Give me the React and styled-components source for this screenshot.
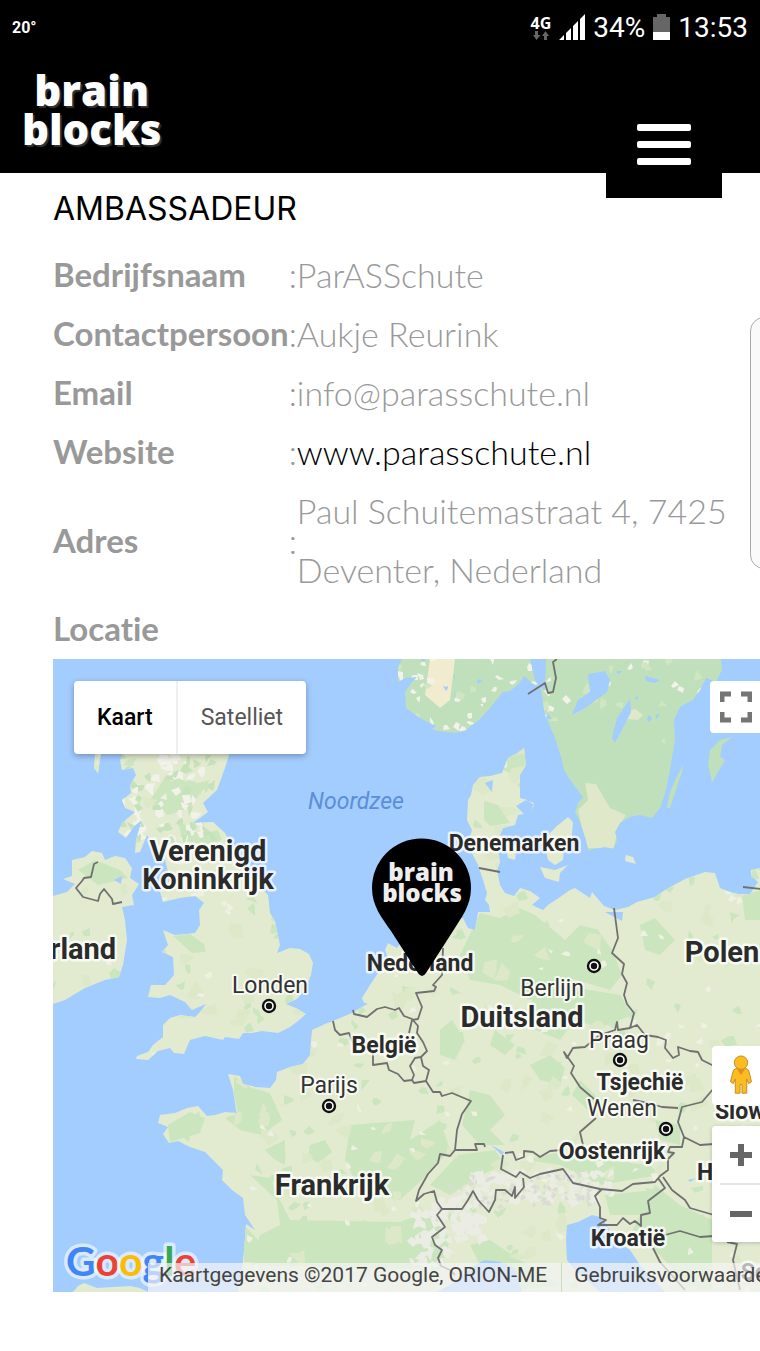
import React from "react";
import styled, { createGlobalStyle } from "styled-components";

const GlobalStyle = createGlobalStyle`
  * {
    box-sizing: border-box;
  }

  body {
    margin: 0;
    background: #fff;
    overflow-x: hidden;
    font-family: Lato, "Open Sans", sans-serif;
  }
`;

const Page = styled.div`
  position: relative;
  overflow-x: hidden;
  padding-bottom: 59px;
`;

const StatusBar = styled.div`
  display: flex;
  align-items: center;
  justify-content: space-between;
  height: 54px;
  padding: 0 12px;
  background: #000;
  color: #fff;
  font-family: Roboto, sans-serif;
`;

const Temperature = styled.span`
  font-size: 16px;
  font-weight: 700;
`;

const StatusItems = styled.div`
  display: flex;
  align-items: center;
  gap: 8px;
  font-size: 28px;
`;

const Network = styled.div`
  display: flex;
  flex-direction: column;
  align-items: center;
  font-family: "Open Sans", sans-serif;
  font-size: 16px;
  font-weight: 700;
  line-height: 16px;
`;

const Header = styled.header`
  display: flex;
  justify-content: space-between;
  height: 119px;
  padding: 0 38px 0 22px;
  background: #000;
`;

const Logo = styled.a`
  display: flex;
  flex-direction: column;
  align-items: center;
  padding-top: 16px;
  color: #fff;
  font-family: "Open Sans", sans-serif;
  font-size: 42px;
  font-weight: 800;
  line-height: 39px;
  text-decoration: none;
  text-shadow: 2px 2px 1px #333;
`;

const MenuButton = styled.button`
  position: relative;
  z-index: 1;
  display: flex;
  flex-direction: column;
  align-items: center;
  justify-content: flex-end;
  gap: 10px;
  width: 116px;
  height: 144px;
  padding: 0 0 33px;
  border: 0;
  background: #000;
`;

const MenuLine = styled.span`
  width: 54px;
  height: 7px;
  border-radius: 2px;
  background: #fff;
`;

const Content = styled.main`
  padding-left: 53px;
`;

const Title = styled.h1`
  margin: 0;
  padding: 16px 0 17px;
  color: #000;
  font-family: Inter, sans-serif;
  font-size: 32px;
  font-weight: 400;
  line-height: 39px;
`;

const Details = styled.table`
  border-collapse: collapse;
  color: #999;
  font-size: 34px;
  font-variant-ligatures: none;
  line-height: 59px;
`;

const Label = styled.th`
  padding: 0;
  font-size: 33px;
  font-weight: 700;
  text-align: left;
  white-space: nowrap;
`;

const Colon = styled.td`
  padding: 0;
  font-weight: 300;
`;

const Value = styled.td`
  padding: 0 24px 0 0;
  font-weight: 300;
`;

const SiteLink = styled.a`
  color: #000;
  text-decoration: none;
`;

const SidePanel = styled.aside`
  position: fixed;
  top: 317px;
  right: -50px;
  width: 60px;
  height: 252px;
  border: 1px solid #aaa;
  border-radius: 14px;
  background: #fafafa;
`;

const Map = styled.section`
  position: relative;
  height: 633px;
  margin-top: 1px;
  overflow: hidden;
  background: #a3ccff;
  font-family: Roboto, sans-serif;
`;

const MapCanvas = styled.svg`
  display: block;
  width: 100%;
  height: 100%;
`;

const MapTypes = styled.div`
  position: absolute;
  top: 22px;
  left: 21px;
  display: flex;
  border-radius: 4px;
  background: #fff;
  box-shadow: 0 2px 6px rgba(0, 0, 0, 0.3);
`;

const MapType = styled.button`
  height: 73px;
  padding: 0 23px;
  border: 0;
  border-left: ${({ $active }) => ($active ? "0" : "2px solid #f0f0f0")};
  background: none;
  color: ${({ $active }) => ($active ? "#000" : "#565656")};
  font-family: Roboto, sans-serif;
  font-size: 23px;
  font-weight: ${({ $active }) => ($active ? 500 : 400)};
`;

const ControlButton = styled.button`
  display: flex;
  align-items: center;
  justify-content: center;
  width: ${({ $width = 58 }) => $width}px;
  height: ${({ $height }) => $height}px;
  padding: 0;
  border: 0;
  border-radius: 4px;
  background: #fff;
`;

const Fullscreen = styled.div`
  position: absolute;
  top: 22px;
  right: -2px;
`;

const MapControls = styled.div`
  position: absolute;
  top: 387px;
  right: -10px;
  display: flex;
  flex-direction: column;
  gap: 21px;
`;

const ZoomControls = styled.div`
  border-radius: 4px;
  background: #fff;
  box-shadow: 0 1px 4px rgba(0, 0, 0, 0.2);
`;

const Divider = styled.div`
  height: 2px;
  margin: 0 8px;
  background: #e6e6e6;
`;

const Attribution = styled.div`
  position: absolute;
  right: 0;
  bottom: 0;
  left: 95px;
  display: flex;
  height: 29px;
  padding-left: 11px;
  overflow: hidden;
  background: rgba(245, 245, 245, 0.7);
  color: #444;
  font-size: 21px;
  line-height: 24px;
  white-space: nowrap;
`;

const Terms = styled.a`
  margin-left: 14px;
  padding-left: 12px;
  border-left: 1px solid #cbdcc3;
  color: #444;
  text-decoration: none;
`;

const details = [
  { label: "Bedrijfsnaam", value: "ParASSchute" },
  { label: "Contactpersoon", value: "Aukje Reurink" },
  { label: "Email", value: "info@parasschute.nl" },
  { label: "Website", value: "www.parasschute.nl", link: true },
  { label: "Adres", value: "Paul Schuitemastraat 4, 7425 Deventer, Nederland" },
];

const land = [
  // great britain
  "M130 740L232 740 229 755 225 768 217 790 203 803 208 812 193 823 213 822 225 833 232 845 240 865 268 895 270 913 275 921 280 945 277 953 290 948 300 949 309 954 313 963 311 975 305 990 297 999 286 1004 296 1008 306 1014 298 1021 290 1027 278 1033 262 1031 252 1033 243 1033 239 1039 225 1037 223 1040 205 1036 190 1040 187 1047 184 1054 174 1053 170 1048 158 1051 148 1060 136 1059 137 1056 148 1052 153 1045 163 1037 163 1025 170 1018 180 1015 195 1017 200 1012 206 1004 192 1010 185 1002 170 995 160 998 148 997 151 985 165 985 174 975 173 957 162 952 168 945 163 930 175 935 195 933 200 925 199 910 204 903 195 896 180 898 163 902 160 892 170 880 165 860 157 855 153 845 147 835 140 852 135 853 136 840 142 820 134 826 126 838 118 832 122 823 135 812 125 808 122 800 131 793 130 785 136 775 133 768 122 770 120 760Z",
  // ireland
  "M53 896L67 892 75 884 63 879 72 876 72 860 85 857 92 851 102 853 105 860 115 856 125 858 132 868 130 878 139 884 132 895 134 905 122 907 125 920 127 940 123 965 119 977 105 980 85 988 65 1000 53 1004Z",
  // mainland
  "M524 748L519 752 508 758 502 773 490 776 480 777 473 785 471 795 468 800 467 820 472 830 468 843 473 855 478 865 483 880 487 893 485 900 489 905 490 912 478 912 475 930 468 928 463 918 450 922 430 920 410 930 397 948 388 943 385 950 388 958 380 970 370 985 362 998 365 1005 352 1013 333 1021 325 1024 312 1030 310 1055 303 1064 290 1067 277 1072 276 1080 270 1088 255 1087 243 1084 240 1076 228 1074 233 1090 236 1110 237 1113 225 1112 215 1115 207 1116 198 1106 187 1108 175 1113 160 1115 158 1123 168 1127 163 1134 169 1143 178 1141 190 1147 205 1152 213 1160 223 1170 222 1180 232 1190 243 1198 245 1215 255 1230 246 1224 244 1250 242 1270 238 1292 770 1292 770 866 751 870 751 876 758 882 750 894 738 894 730 892 720 888 715 873 705 872 685 879 665 890 655 897 637 902 628 907 615 910 604 906 592 892 590 898 575 888 570 890 560 897 548 905 543 910 532 905 540 898 530 891 520 888 514 896 505 893 500 885 497 870 500 862 498 850 505 840 500 835 503 828 515 825 518 815 530 813 534 805 527 800 520 798 520 775 526 765Z",
  "M73 1292L78 1286 84 1283 97 1288 130 1286 140 1288 148 1292Z",
  "M505 842L517 846 515 860 508 858Z",
  "M568 817L573 822 571 845 564 848 563 860 555 865 548 860 545 845 550 833 557 826Z",
  "M540 867L555 870 568 865 560 873 559 882 545 878Z",
  "M626 855L633 857 636 864 625 861Z",
  "M516 806L526 800 534 803 530 813 524 814Z",
  "M95 753L101 754 98 773 94 768Z",
];

const northLand = [
  "M398 682L398 668 402 659 546 659 545 690 532 683 524 676 520 683 510 691 503 692 490 708 480 719 466 730 455 733 438 731 432 729 436 726 420 718 406 708 405 692 412 682 417 677 405 678Z",
  "M530 659L535 680 541 690 545 715 555 738 562 760 564 770 570 780 583 797 578 803 575 812 580 822 586 840 588 850 605 847 613 849 617 840 615 832 620 823 630 817 640 815 652 818 660 808 666 790 670 770 675 740 674 720 680 707 693 700 700 690 706 678 716 682 722 670 721 659Z",
  "M683 765L682 772 670 808 667 808 669 795 675 780Z",
  "M732 737L722 745 720 757 725 760 712 782 708 765 710 750 720 740Z",
];

const forest = [
  "M524 748L508 758 503 770 517 777 526 765Z",
  "M484 801L498 805 510 823 490 826 484 820Z",
  "M178 820L200 835 218 830 222 840 205 845 182 840Z",
  "M173 936L190 934 204 944 206 952 192 953Z",
  "M150 800L170 770 190 785 210 780 190 808 168 815Z",
  "M480 913L500 918 520 908 535 915 565 940 580 925 598 930 612 950 622 975 610 990 570 978 530 1000 500 985 470 980 460 955Z",
  "M530 1003L560 985 620 995 632 1015 600 1028 575 1020 560 1040 535 1030Z",
  "M440 1030L452 1020 465 1040 455 1060 440 1055Z",
  "M470 1090L490 1095 505 1115 490 1130 505 1145 480 1145 462 1125Z",
  "M530 1065L550 1055 565 1068 560 1085 540 1080Z",
  "M495 1030L515 1045 505 1055 490 1045Z",
  "M168 1125L190 1112 205 1118 200 1133 180 1139 170 1142Z",
  "M234 1076L252 1088 270 1093 282 1120 262 1135 240 1130 225 1118 238 1113 234 1095Z",
  "M265 1150L285 1140 285 1165 275 1160Z",
  "M250 1175L270 1178 280 1200 290 1220 400 1222 432 1210 450 1240 440 1270 250 1265 260 1235 280 1225 277 1200Z",
  "M310 1145L325 1140 332 1152 318 1163 308 1157Z",
  "M350 1125L415 1120 410 1140 440 1120 450 1150 422 1180 400 1200 360 1190 345 1160Z",
  "M458 1155L495 1150 505 1165 480 1175 450 1195 430 1185Z",
  "M470 1245L490 1240 520 1260 560 1285 520 1290 480 1265Z",
  "M525 1160L560 1152 600 1160 650 1165 660 1175 600 1185 560 1165Z",
  "M605 1195L655 1190 640 1215 610 1215Z",
  "M655 1185L680 1205 712 1220 712 1290 690 1290 660 1255 630 1235Z",
  "M640 925L655 918 675 940 660 955 645 950Z",
  "M742 895L770 888 770 920 745 920Z",
  "M655 1120L680 1125 680 1145 660 1140Z",
  "M78 870L95 860 120 870 128 878 98 885Z",
  "M244 1225L258 1240 268 1263 244 1262Z",
  "M580 1080L600 1100 590 1112 572 1095Z",
];

const fields = [
  "M430 659L455 659 450 700 440 708 425 695Z",
  "M625 712L635 709 643 715 638 720 626 719Z",
  "M585 783L596 784 610 808 626 815 618 827 614 848 588 848 582 828 578 810 588 800Z",
];

const water = [
  "M588 674L605 671 610 680 607 692 592 703 585 708 572 715 578 700 590 692Z",
  "M630 699L631 712 615 743 612 738 617 718Z",
  "M645 676L660 680 655 683 646 681Z",
  "M566 1240L567 1225 578 1222 592 1215 600 1217 604 1221 615 1240 630 1250 640 1265 665 1292 600 1292 575 1270 567 1260Z",
  "M437 1292L455 1282 475 1265 485 1260 500 1262 515 1268 522 1292Z",
  "M114 880L122 876 121 884Z",
  "M485 783L493 780 492 792Z",
  "M491 1145L504 1152 502 1155Z",
  "M605 912L623 912 622 921Z",
  "M356 1000L368 1004 360 1007Z",
  "M688 1180L696 1178 690 1182Z",
];

const borders = [
  "M98 862L94 864 91 877 84 878 82 881 76 888 83 897 98 901 100 894 104 889 112 899 113 904 122 902",
  "M528 694L545 683 548 693 553 692 556 678 553 662 557 659",
  "M479 868L500 872",
  "M743 887L762 889",
  "M443 948L442 975 433 985 436 987 434 991 416 993 422 1007 418 1019 412 1020",
  "M353 1010L354 1014 367 1017 377 1009 385 1007 395 1010 399 1008 404 1016 412 1019 418 1026 417 1033 423 1042 427 1051 421 1057 423 1066 429 1070 426 1081",
  "M412 1020L409 1033",
  "M333 1021L335 1030 340 1035 349 1033 354 1045M373 1053L373 1065 387 1063 389 1070 398 1074 404 1081 412 1080 414 1083 426 1081 433 1092 440 1092 442 1096 452 1093 471 1101 462 1114 457 1130 455 1150",
  "M421 1057L415 1058 410 1066 414 1075 412 1080",
  "M455 1150L477 1150 475 1144 484 1144 485 1147M455 1150L450 1156 440 1154 438 1163 428 1174 419 1190 416 1201 424 1194 434 1191 437 1202 442 1209 462 1209 468 1200 473 1191 478 1200 489 1212 495 1200 496 1190 505 1190 512 1196 515 1187 515 1198 524 1187 523 1178",
  "M505 1153L513 1152 516 1160 524 1157 524 1151 533 1152 540 1157 550 1151 562 1150M503 1155L501 1169 516 1177 520 1172 530 1178 540 1174 563 1169 573 1183 600 1189 622 1191 633 1184 655 1182 660 1176 668 1170 668 1160",
  "M442 1209L437 1215 445 1227 432 1237 435 1245 442 1250 438 1258 441 1266 450 1270 455 1275",
  "M614 908L618 938 612 953 624 964 622 974 627 983 624 995 627 1004 634 1013 630 1028 618 1030 617 1022 615 1030 600 1035 585 1047 573 1048 567 1058 564 1052 574 1066 571 1073 580 1087 594 1099",
  "M630 1028L637 1025 645 1035 658 1037 666 1040 665 1048 673 1058 679 1055 678 1047 690 1051 698 1052 702 1060 714 1066",
  "M633 1100L648 1103 662 1107 678 1108M714 1088L702 1102 682 1107 678 1122 684 1137 682 1147 670 1147 668 1152 674 1153 667 1160M684 1137L700 1145 714 1144",
  "M596 1118L580 1132 583 1145 575 1152",
  "M602 1189L595 1196 600 1207 600 1218 606 1220 598 1225 617 1225 623 1218 630 1224 635 1221 641 1226 641 1215 650 1213 648 1201 665 1188 658 1178",
  "M663 1177L672 1190 685 1200 690 1208 714 1215M650 1235L665 1235 680 1231 700 1237 714 1236M653 1248L660 1262 685 1290M727 1242L737 1244 733 1260 740 1290",
];

const countries = [
  { text: "Verenigd", x: 208, y: 861, size: 29 },
  { text: "Koninkrijk", x: 208, y: 889, size: 29 },
  { text: "rland", x: 83, y: 959, size: 29 },
  { text: "Polen", x: 722, y: 962, size: 29 },
  { text: "Duitsland", x: 522, y: 1027, size: 29 },
  { text: "Frankrijk", x: 332, y: 1195, size: 29 },
  { text: "Denemarken", x: 514, y: 851, size: 23 },
  { text: "Nederland", x: 420, y: 971, size: 23 },
  { text: "België", x: 384, y: 1053, size: 23 },
  { text: "Tsjechië", x: 640, y: 1090, size: 23 },
  { text: "Oostenrijk", x: 612, y: 1159, size: 23 },
  { text: "Kroatië", x: 628, y: 1246, size: 23 },
  { text: "Slow", x: 740, y: 1119, size: 23 },
  { text: "H", x: 705, y: 1180, size: 23 },
  { text: "Se", x: 754, y: 1280, size: 23 },
];

const cities = [
  { text: "Londen", x: 270, y: 993, dotX: 269, dotY: 1006 },
  { text: "Parijs", x: 329, y: 1093, dotX: 329, dotY: 1106 },
  { text: "Berlijn", x: 552, y: 996, dotX: 594, dotY: 966 },
  { text: "Praag", x: 619, y: 1048, dotX: 620, dotY: 1060 },
  { text: "Wenen", x: 622, y: 1116, dotX: 666, dotY: 1129 },
];

// small irregular facets that give the land its patchwork look
function makeFacets(count, seed, area, size) {
  let state = seed;
  const next = () => {
    state = (state * 16807) % 2147483647;
    return state / 2147483647;
  };
  const [left, top, width, height] = area;

  return Array.from({ length: count }, () => {
    const x = left + next() * width;
    const y = top + next() * height;
    const points = [0, 1, 2, 3, 4].map((corner) => {
      const angle = (corner / 5) * Math.PI * 2 + next();
      const radius = size * (0.3 + next());
      return `${Math.round(x + Math.cos(angle) * radius)} ${Math.round(
        y + Math.sin(angle) * radius
      )}`;
    });
    return `M${points.join("L")}Z`;
  }).join("");
}

const europe = [53, 740, 710, 552];
const facets = [
  { fill: "#cbe6bf", d: makeFacets(230, 11, europe, 6) },
  { fill: "#dde8c9", d: makeFacets(200, 29, europe, 9) },
  { fill: "#eef0e2", d: makeFacets(170, 47, europe, 4) },
  { fill: "#f2f1ea", d: makeFacets(45, 83, [120, 755, 85, 90], 6) },
  { fill: "#c5e2bb", d: makeFacets(40, 61, [120, 755, 110, 90], 5) },
  { fill: "#ebece4", d: makeFacets(110, 97, [465, 1172, 145, 32], 5) },
  { fill: "#ebece4", d: makeFacets(60, 23, [440, 1200, 45, 40], 5) },
  { fill: "#dcdcd6", d: makeFacets(70, 71, [450, 1175, 140, 32], 3) },
  { fill: "#ebece4", d: makeFacets(50, 37, [412, 1205, 38, 65], 5) },
];

const northFacets = [
  { fill: "#f2f1ea", d: makeFacets(36, 17, [400, 659, 150, 70], 4) },
  { fill: "#f2f1ea", d: makeFacets(14, 53, [545, 659, 190, 60], 4) },
  { fill: "#a3ccff", d: makeFacets(16, 19, [400, 659, 300, 60], 3) },
  { fill: "#cfe6c1", d: makeFacets(26, 31, [400, 659, 320, 90], 5) },
];

function Shapes({ shapes, fill }) {
  return <path d={shapes.join("")} fill={fill} />;
}

function EuropeMap() {
  return (
    <MapCanvas
      viewBox="53 659 707 633"
      preserveAspectRatio="xMinYMin slice"
      role="img"
      aria-label="Kaart"
    >
      <clipPath id="land">
        <path d={land.join("")} />
      </clipPath>
      <clipPath id="north">
        <path d={northLand.join("")} />
      </clipPath>
      <Shapes shapes={land} fill="#e2ebd0" />
      <g clipPath="url(#land)">
        <Shapes shapes={forest} fill="#cbe6bf" />
        {facets.map((facet, index) => (
          <path key={index} d={facet.d} fill={facet.fill} />
        ))}
      </g>
      <Shapes shapes={northLand} fill="#bfe0bb" />
      <g clipPath="url(#north)">
        <path d={fields[0]} fill="#f1ebcf" />
        <path d={fields[1] + fields[2]} fill="#dfe8c8" />
        {northFacets.map((facet, index) => (
          <path key={index} d={facet.d} fill={facet.fill} />
        ))}
      </g>
      <Shapes shapes={water} fill="#a3ccff" />
      <path
        d={borders.join("")}
        fill="none"
        stroke="#707070"
        strokeWidth="1.8"
        strokeLinejoin="round"
      />
      <text
        x="356"
        y="809"
        fontSize="23"
        fontStyle="italic"
        textAnchor="middle"
        fill="#5b8fd6"
      >
        Noordzee
      </text>
      <g
        textAnchor="middle"
        stroke="#fff"
        strokeOpacity="0.75"
        strokeLinejoin="round"
        paintOrder="stroke"
      >
        {countries.map(({ text, x, y, size }) => (
          <text
            key={text}
            x={x}
            y={y}
            fontSize={size}
            fontWeight="700"
            fill="#2b2b2b"
            strokeWidth="5"
          >
            {text}
          </text>
        ))}
        {cities.map(({ text, x, y }) => (
          <text key={text} x={x} y={y} fontSize="23" fill="#333" strokeWidth="4">
            {text}
          </text>
        ))}
      </g>
      {cities.map(({ text, dotX, dotY }) => (
        <g key={text}>
          <circle cx={dotX} cy={dotY} r="6" fill="#fff" stroke="#111" strokeWidth="2.4" />
          <circle cx={dotX} cy={dotY} r="3.2" fill="#111" />
        </g>
      ))}
      <path
        d="M372 888A49.500 49.500 0 0 1 471 888C471 906 461 918 453 931L426 973Q422 979 418 973L391 931C382 918 372 906 372 888Z"
        fill="#000"
      />
      <g
        fill="#eee"
        textAnchor="middle"
        fontFamily="Open Sans, sans-serif"
        fontSize="24"
        fontWeight="800"
      >
        <text x="421" y="881">
          brain
        </text>
        <text x="422" y="902">
          blocks
        </text>
      </g>
      <text
        x="66"
        y="1276"
        fontFamily="Lato, sans-serif"
        fontSize="41"
        fontWeight="700"
        stroke="#fff"
        strokeOpacity="0.6"
        strokeWidth="7"
        strokeLinejoin="round"
        paintOrder="stroke"
      >
        <tspan fill="#4285f4">G</tspan>
        <tspan fill="#ea4335">o</tspan>
        <tspan fill="#fbbc05">o</tspan>
        <tspan fill="#4285f4">g</tspan>
        <tspan fill="#34a853">l</tspan>
        <tspan fill="#ea4335">e</tspan>
      </text>
    </MapCanvas>
  );
}

function ArrowsIcon() {
  return (
    <svg width="16" height="9" viewBox="0 0 16 9" fill="#666">
      <path d="M2 0h3v4h2.500L3.500 9 0 4h2zM11 9h3V5h2L12.500 0 9 5h2z" />
    </svg>
  );
}

function SignalIcon() {
  return (
    <svg width="26" height="26" viewBox="0 0 26 26" fill="#fff">
      <path d="M0 26L5 21V26ZM7 26V19L12 14V26ZM14 26V12L19 7V26ZM21 26V5L26 0V26Z" />
    </svg>
  );
}

function BatteryIcon() {
  return (
    <svg width="17" height="26" viewBox="0 0 17 26">
      <path d="M0 3H4V0H13V3H17V26H0Z" fill="#666" />
      <path d="M0 18H17V26H0Z" fill="#fff" />
    </svg>
  );
}

function FullscreenIcon() {
  return (
    <svg width="32" height="32" viewBox="0 0 32 32">
      <path
        d="M2 11V3H11M21 3H30V11M30 21V29H21M11 29H2V21"
        fill="none"
        stroke="#757575"
        strokeWidth="5"
      />
    </svg>
  );
}

function PegmanIcon() {
  return (
    <svg width="24" height="42" viewBox="0 0 24 44">
      <path
        d="M7 14H17L20 16 23 28 20 30 18 25V40H13V31H11V40H6V25L4 30 1 28 4 16Z"
        fill="#fbbc22"
        stroke="#c58a20"
      />
      <circle cx="12" cy="8" r="7" fill="#fbbc22" stroke="#c58a20" />
      <path d="M8 15H16L12 21Z" fill="#e58a1f" />
    </svg>
  );
}

function ZoomIcon({ plus }) {
  return (
    <svg width="22" height="22" viewBox="0 0 22 22">
      <path
        d={plus ? "M0 11H22M11 0V22" : "M0 11H22"}
        stroke="#666"
        strokeWidth="6"
      />
    </svg>
  );
}

function DetailRow({ detail }) {
  const { label, value, link } = detail;

  return (
    <tr>
      <Label scope="row">{label}</Label>
      <Colon>:</Colon>
      <Value>{link ? <SiteLink href="#website">{value}</SiteLink> : value}</Value>
    </tr>
  );
}

function App() {
  return (
    <Page>
      <GlobalStyle />
      <StatusBar>
        <Temperature>20°</Temperature>
        <StatusItems>
          <Network>
            4G
            <ArrowsIcon />
          </Network>
          <SignalIcon />
          <span>34%</span>
          <BatteryIcon />
          <span>13:53</span>
        </StatusItems>
      </StatusBar>
      <Header>
        <Logo href="#home">
          <span>brain</span>
          <span>blocks</span>
        </Logo>
        <MenuButton aria-label="Menu">
          <MenuLine />
          <MenuLine />
          <MenuLine />
        </MenuButton>
      </Header>
      <Content>
        <Title>AMBASSADEUR</Title>
        <Details>
          <tbody>
            {details.map((detail) => (
              <DetailRow key={detail.label} detail={detail} />
            ))}
            <tr>
              <Label scope="row">Locatie</Label>
            </tr>
          </tbody>
        </Details>
        <Map>
          <EuropeMap />
          <MapTypes>
            <MapType $active>Kaart</MapType>
            <MapType>Satelliet</MapType>
          </MapTypes>
          <Fullscreen>
            <ControlButton $width={52} $height={52} aria-label="Volledig scherm">
              <FullscreenIcon />
            </ControlButton>
          </Fullscreen>
          <MapControls>
            <ControlButton $height={59} aria-label="Street View">
              <PegmanIcon />
            </ControlButton>
            <ZoomControls>
              <ControlButton $height={57} aria-label="Inzoomen">
                <ZoomIcon plus />
              </ControlButton>
              <Divider />
              <ControlButton $height={57} aria-label="Uitzoomen">
                <ZoomIcon />
              </ControlButton>
            </ZoomControls>
          </MapControls>
          <Attribution>
            <span>Kaartgegevens ©2017 Google, ORION-ME</span>
            <Terms href="#terms">Gebruiksvoorwaarden</Terms>
          </Attribution>
        </Map>
      </Content>
      <SidePanel />
    </Page>
  );
}

export default App;
